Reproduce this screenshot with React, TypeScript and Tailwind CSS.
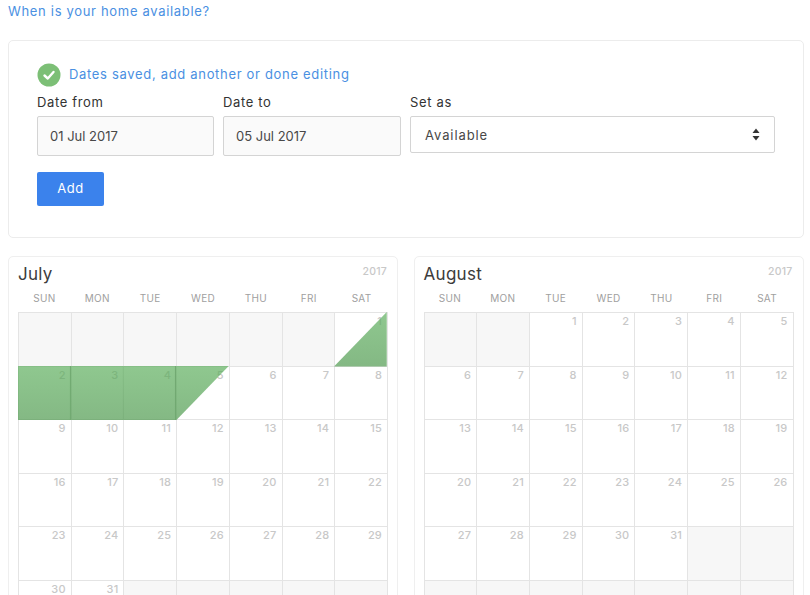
const F = "font-['Inter','Liberation_Sans',sans-serif]";
const days = ["SUN", "MON", "TUE", "WED", "THU", "FRI", "SAT"];

type Fill = "none" | "full" | "start" | "end";

function Cell({ day, fill = "none" }: { day?: number; fill?: Fill }) {
  const pts =
    fill === "full" ? "0,0 100,0 100,100 0,100" : fill === "start" ? "0,100 100,0 100,100" : "0,0 100,0 0,100";
  return (
    <div className={`relative h-[53.5px] border-r border-b border-[#e4e4e4] ${day ? "bg-white" : "bg-[#f7f7f7]"}`}>
      {day ? (
        <span className="absolute right-[5px] top-[1px] text-[11px] leading-[14px] font-medium tracking-[0.2px] text-[#c8c8c8]">{day}</span>
      ) : null}
      {fill !== "none" ? (
        <svg className="absolute left-[-1px] top-[-1px] h-[54.5px] w-[calc(100%+1px)]" viewBox="0 0 100 100" preserveAspectRatio="none">
          <defs>
            <linearGradient id="g" x1="0" y1="0" x2="0" y2="1">
              <stop offset="0" stopColor="#5fb05f" stopOpacity="0.7" />
              <stop offset="1" stopColor="#4f9a4f" stopOpacity="0.7" />
            </linearGradient>
          </defs>
          <polygon points={pts} fill="url(#g)" />
          {fill === "full" ? (
            <line x1="99.5" y1="0" x2="99.5" y2="100" stroke="#6fa86f" strokeWidth="1" vectorEffect="non-scaling-stroke" />
          ) : null}
        </svg>
      ) : null}
    </div>
  );
}

function Calendar({ name, blanksStart, total, blanksEnd, fills }: { name: string; blanksStart: number; total: number; blanksEnd: number; fills?: Record<number, Fill> }) {
  return (
    <div className="h-[400px] rounded-[5px] border border-[#efefef] bg-white px-[9px]">
      <div className="flex h-[34px] items-start justify-between">
        <span className="mt-[6px] text-[17px] leading-[22px] tracking-[0.3px] text-[#3c3c3c]">{name}</span>
        <span className="mt-[8px] mr-[1px] text-[10.5px] leading-[14px] font-medium tracking-[0.2px] text-[#c8c8c8]">2017</span>
      </div>
      <div className="grid h-[21px] grid-cols-7 items-start">
        {days.map((d) => (
          <span key={d} className="text-center text-[10px] leading-[14px] tracking-[0.3px] text-[#a0a0a0]">{d}</span>
        ))}
      </div>
      <div className="grid grid-cols-7 border-t border-l border-[#e4e4e4]">
        {Array.from({ length: blanksStart }, (_, i) => <Cell key={`s${i}`} />)}
        {Array.from({ length: total }, (_, i) => <Cell key={i} day={i + 1} fill={fills?.[i + 1]} />)}
        {Array.from({ length: blanksEnd }, (_, i) => <Cell key={`e${i}`} />)}
      </div>
    </div>
  );
}

function Field({ label, value, width }: { label: string; value: string; width: string }) {
  return (
    <div className={width}>
      <div className="h-[20px] text-[13px] leading-[20px] tracking-[0.65px] text-[#333]">{label}</div>
      <div className="mt-[4px] flex h-[40px] items-center rounded-[2px] border border-[#d4d4d4] bg-[#fafafa] pl-[12px] pt-[1px] text-[13px] text-[#484848]">{value}</div>
    </div>
  );
}

export default function App() {
  return (
    <div className={`${F} h-[595px] w-[810px] overflow-hidden bg-white pl-[8px] pr-[6px]`}>
      <div className="h-[40px] pt-[3px] text-[13px] leading-[16px] tracking-[0.68px] text-[#4a90e2]">When is your home available?</div>
      <div className="h-[198px] rounded-[5px] border border-[#ececec] px-[28px] pt-[22px]">
        <div className="flex h-[24px] items-center gap-[8px]">
          <svg width="24" height="24" viewBox="0 0 24 24">
            <circle cx="12" cy="12" r="11.5" fill="#7cbf76" />
            <path d="M7.5 12.5 L10.8 15.5 L16.5 9" fill="none" stroke="#fff" strokeWidth="2.4" strokeLinecap="round" strokeLinejoin="round" />
          </svg>
          <span className="text-[13px] tracking-[0.68px] text-[#4a90e2]">Dates saved, add another or done editing</span>
        </div>
        <div className="mt-[5px] flex items-start gap-[9px]">
          <Field label="Date from" value="01 Jul 2017" width="w-[177px]" />
          <Field label="Date to" value="05 Jul 2017" width="w-[178px]" />
          <div className="w-[365px]">
            <div className="h-[20px] text-[13px] leading-[20px] tracking-[0.65px] text-[#333]">Set as</div>
            <div className="mt-[4px] flex h-[37px] items-center justify-between rounded-[2px] border border-[#d4d4d4] bg-white px-[14px] pt-[2px] text-[13px] tracking-[0.9px] text-[#484848]">
              <span>Available</span>
              <svg width="8" height="13" viewBox="0 0 8 13" fill="#333" className="-mt-[2px]">
                <path d="M4 0.5 L7.5 5 L0.5 5 Z" />
                <path d="M4 12.5 L7.5 8 L0.5 8 Z" />
              </svg>
            </div>
          </div>
        </div>
        <button className="mt-[16px] h-[34px] w-[67px] rounded-[2px] bg-[#3b82ec] text-[13px] tracking-[0.5px] text-white">Add</button>
      </div>
      <div className="mt-[18px] grid grid-cols-[390px_390px] gap-x-[15.5px]">
        <Calendar name="July" blanksStart={6} total={31} blanksEnd={5} fills={{ 1: "start", 2: "full", 3: "full", 4: "full", 5: "end" }} />
        <Calendar name="August" blanksStart={2} total={31} blanksEnd={9} />
      </div>
    </div>
  );
}
